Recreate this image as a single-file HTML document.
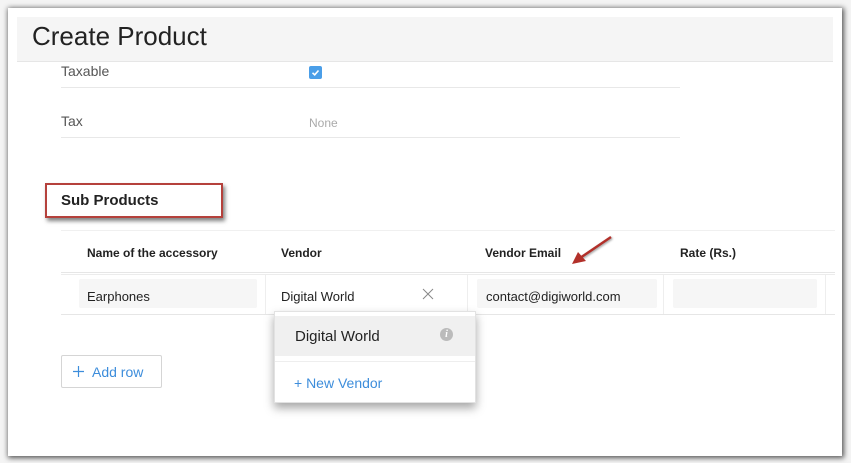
<!DOCTYPE html>
<html><head><meta charset="utf-8"><style>
*{margin:0;padding:0;box-sizing:border-box}
body{width:851px;height:463px;background:#f4f4f4;font-family:"Liberation Sans",sans-serif;position:relative;overflow:hidden;color:#222}
.win{position:absolute;left:8px;top:8px;width:834px;height:448px;background:#fff;box-shadow:1px 1px 5px 1px rgba(0,0,0,.65)}
.a{position:absolute}
.hdr{left:17px;top:17px;width:816px;height:45px;background:#f5f5f5;border-bottom:1px solid #e6e6e6}
.hdr span{position:absolute;left:15px;top:4px;font-size:26px;color:#222}
.lbl{font-size:14px;color:#555}
.line{height:1px;background:#e8e8e8}
.th{font-size:12px;font-weight:bold;color:#222;top:246px}
.cell{background:#f6f6f6;border-radius:2px;height:29px;top:279px}
.td{font-size:13px;color:#222}
</style></head><body>
<div class="win"></div>
<div class="a hdr"><span>Create Product</span></div>
<div class="a lbl" style="left:61px;top:63px">Taxable</div>
<div class="a" style="left:309px;top:66px;width:13px;height:13px;background:#4a9ee8;border-radius:2px"><svg width="13" height="13"><path d="M3.5 6.8l2.2 2 3.8-4.3" stroke="#fff" stroke-width="1.6" fill="none"/></svg></div>
<div class="a line" style="left:61px;top:87px;width:619px"></div>
<div class="a lbl" style="left:61px;top:113px">Tax</div>
<div class="a" style="left:309px;top:116px;font-size:12px;color:#aaa">None</div>
<div class="a line" style="left:61px;top:137px;width:619px"></div>
<div class="a" style="left:45px;top:183px;width:178px;height:35px;border:2px solid #b5413c;box-shadow:2px 3px 4px rgba(0,0,0,.5)"></div>
<div class="a" style="left:61px;top:192px;font-size:15px;font-weight:bold;color:#222">Sub Products</div>
<div class="a line" style="left:61px;top:230px;width:774px;background:#f0f0f0"></div>
<div class="a th" style="left:87px">Name of the accessory</div>
<div class="a th" style="left:281px">Vendor</div>
<div class="a th" style="left:485px">Vendor Email</div>
<div class="a th" style="left:680px">Rate (Rs.)</div>
<div class="a line" style="left:61px;top:272px;width:774px;background:#e6e6e6"></div>
<div class="a line" style="left:61px;top:274px;width:774px;background:#ececec"></div>
<div class="a line" style="left:61px;top:314px;width:774px;background:#e6e6e6"></div>
<div class="a" style="left:265px;top:275px;width:1px;height:39px;background:#eee"></div>
<div class="a" style="left:467px;top:275px;width:1px;height:39px;background:#eee"></div>
<div class="a" style="left:663px;top:275px;width:1px;height:39px;background:#eee"></div>
<div class="a" style="left:825px;top:275px;width:1px;height:39px;background:#eee"></div>
<div class="a cell" style="left:79px;width:178px"></div>
<div class="a cell" style="left:477px;width:180px"></div>
<div class="a cell" style="left:673px;width:144px"></div>
<div class="a td" style="left:87px;top:289px">Earphones</div>
<div class="a td" style="left:281px;top:289px">Digital World</div>
<div class="a" style="left:422px;top:287px"><svg width="12" height="12"><path d="M1 1l10 10M11 1L1 11" stroke="#888" stroke-width="1"/></svg></div>
<div class="a td" style="left:486px;top:289px">contact@digiworld.com</div>
<svg class="a" style="left:568px;top:234px" width="50" height="34"><path d="M43 3L12 24" stroke="#b2302a" stroke-width="2.5" filter="drop-shadow(1px 1px 1px rgba(0,0,0,.4))"/><path d="M4 30L10 18L18 27Z" fill="#b2302a"/></svg>
<div class="a" style="left:274px;top:311px;width:202px;height:92px;background:#fff;border:1px solid #e2e2e2;box-shadow:0 5px 9px rgba(0,0,0,.35)"></div>
<div class="a" style="left:275px;top:316px;width:200px;height:40px;background:#f0f0f0"></div>
<div class="a" style="left:295px;top:328px;font-size:15px;color:#222">Digital World</div>
<div class="a" style="left:440px;top:328px;width:13px;height:13px;border-radius:50%;background:#bbb;color:#fff;font-size:10px;font-style:italic;font-weight:bold;text-align:center;line-height:13px;font-family:'Liberation Serif',serif">i</div>
<div class="a line" style="left:275px;top:361px;width:200px;background:#eee"></div>
<div class="a" style="left:294px;top:375px;font-size:14px;color:#3d8ddb">+ New Vendor</div>
<div class="a" style="left:61px;top:355px;width:101px;height:33px;border:1px solid #d5d5d5;border-radius:2px"></div>
<svg class="a" style="left:72px;top:365px" width="13" height="13"><path d="M6.5 1v11M1 6.5h11" stroke="#3d8ddb" stroke-width="1.2"/></svg>
<div class="a" style="left:92px;top:364px;font-size:14px;color:#3d8ddb">Add row</div>
</body></html>
